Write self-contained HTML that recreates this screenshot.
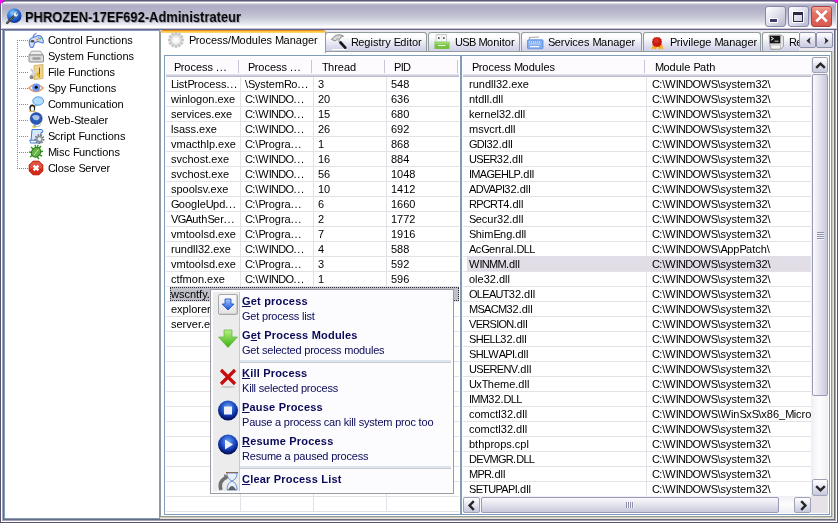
<!DOCTYPE html><html><head><meta charset="utf-8"><style>
html,body{margin:0;padding:0;}
body{width:838px;height:523px;overflow:hidden;background:#ff00ff;position:relative;font-family:"Liberation Sans",sans-serif;}
#win{position:absolute;left:0;top:0;width:838px;height:523px;overflow:hidden;border-radius:7px 7px 0 0;background:#5a5c76;}
svg{position:absolute;overflow:visible}
div{will-change:transform}
</style></head><body><div id="win">
<div style="position:absolute;left:0px;top:0px;width:838px;height:30px;background:#5a5c76;border-radius:7px 7px 0 0;"></div>
<div style="position:absolute;left:1px;top:1px;width:836px;height:29px;background:linear-gradient(to bottom,#aaa2ba 0px,#aaa2ba 1px,#ffffff 1px,#ffffff 2px,#d4d6e2 2px,#d4d6e2 3px,#bebcce 3px,#bebcce 4px,#b0aec6 4px,#b2b0c8 8px,#bcbece 13px,#d0d2de 19px,#e8e8f0 23px,#f8f8fc 25px,#ffffff 25px,#ffffff 27px,#c4c4d4 27px,#c4c4d4 28px,#66668a 28px,#66668a 29px);border-radius:6px 6px 0 0;"></div>
<div style="position:absolute;left:1px;top:3px;width:1px;height:26px;background:linear-gradient(#ffffff,#eeeef6);"></div>
<div style="position:absolute;left:836px;top:3px;width:1px;height:26px;background:linear-gradient(#ffffff,#e4e4ee);"></div>
<svg style="left:6px;top:8px" width="17" height="17" viewBox="0 0 17 17">
<defs><radialGradient id="gs" cx="0.38" cy="0.3" r="0.75"><stop offset="0" stop-color="#8ad0ff"/><stop offset="0.45" stop-color="#2a78e0"/><stop offset="1" stop-color="#0c2a90"/></radialGradient></defs>
<circle cx="8.3" cy="7.8" r="7.2" fill="url(#gs)"/>
<path d="M1.2 15 L9 7" stroke="#3a3a3a" stroke-width="2.4" stroke-linecap="round"/>
<path d="M1.2 15 L9 7" stroke="#a0a0a0" stroke-width="0.9" stroke-dasharray="1 1"/>
<path d="M8.2 8.3 L7.4 6.2 Q8 3.6 10.6 3.6 L11.2 3.8 L9.8 5.6 L10.6 6.6 L12.2 5.2 Q12.6 7.6 10.4 8.8 Z" fill="#f4f4f4" stroke="#888" stroke-width="0.5"/>
</svg>
<div style="position:absolute;left:25px;top:10px;font-size:14px;line-height:15px;font-weight:bold;color:#000;letter-spacing:0px;white-space:nowrap;text-shadow:1px 1px 0 #a8a8bc;transform:scaleX(0.922);transform-origin:0 0;">PHROZEN-17EF692-Administrateur</div>
<div style="position:absolute;left:765px;top:6px;width:21px;height:21px;box-sizing:border-box;border:1px solid #8888a8;border-radius:3px;background:linear-gradient(135deg,#ffffff 0%,#e6e6f0 40%,#b8b8d0 100%);"></div>
<div style="position:absolute;left:788px;top:6px;width:21px;height:21px;box-sizing:border-box;border:1px solid #8888a8;border-radius:3px;background:linear-gradient(135deg,#ffffff 0%,#e6e6f0 40%,#b8b8d0 100%);"></div>
<div style="position:absolute;left:811px;top:6px;width:21px;height:21px;box-sizing:border-box;border:1px solid #b04040;border-radius:3px;background:linear-gradient(to bottom,#f2a898 0%,#e47468 30%,#de6258 70%,#d45a50 100%);"></div>
<div style="position:absolute;left:769px;top:18px;width:9px;height:5px;box-sizing:border-box;border:1px solid #fff;background:#3c3c6a;"></div>
<div style="position:absolute;left:792px;top:11px;width:12px;height:12px;box-sizing:border-box;border:1px solid #fff;"></div>
<div style="position:absolute;left:793px;top:12px;width:10px;height:10px;box-sizing:border-box;border:1px solid #2a2a48;border-top-width:3px;"></div>
<svg style="left:811px;top:6px" width="21" height="21" viewBox="0 0 21 21"><path d="M5.2 4.8 L15.8 15.6 M15.8 4.8 L5.2 15.6" stroke="#902828" stroke-width="3.6" stroke-opacity="0.35"/><path d="M5.2 4.8 L15.8 15.6 M15.8 4.8 L5.2 15.6" stroke="#fff" stroke-width="2.8"/></svg>
<div style="position:absolute;left:0px;top:30px;width:1px;height:493px;background:#545670;"></div>
<div style="position:absolute;left:1px;top:30px;width:1px;height:492px;background:#ffffff;"></div>
<div style="position:absolute;left:2px;top:30px;width:1px;height:490px;background:#a8a4b8;"></div>
<div style="position:absolute;left:3px;top:30px;width:1px;height:489px;background:#6a6a80;"></div>
<div style="position:absolute;left:837px;top:30px;width:1px;height:493px;background:#545670;"></div>
<div style="position:absolute;left:836px;top:30px;width:1px;height:492px;background:#ffffff;"></div>
<div style="position:absolute;left:835px;top:30px;width:1px;height:490px;background:#a8a4b8;"></div>
<div style="position:absolute;left:834px;top:30px;width:1px;height:489px;background:#6a6a80;"></div>
<div style="position:absolute;left:0px;top:522px;width:838px;height:1px;background:#545670;"></div>
<div style="position:absolute;left:1px;top:521px;width:836px;height:1px;background:#ffffff;"></div>
<div style="position:absolute;left:2px;top:520px;width:834px;height:1px;background:#a8a4b8;"></div>
<div style="position:absolute;left:3px;top:519px;width:832px;height:1px;background:#6a6a80;"></div>
<div style="position:absolute;left:4px;top:30px;width:156px;height:489px;box-sizing:border-box;border:1px solid #7f9db9;background:#fff;"></div>
<svg style="left:0;top:0" width="160" height="200">
<rect x="17" y="40" width="1" height="1" fill="#8e8a80"/>
<rect x="17" y="42" width="1" height="1" fill="#8e8a80"/>
<rect x="17" y="44" width="1" height="1" fill="#8e8a80"/>
<rect x="17" y="46" width="1" height="1" fill="#8e8a80"/>
<rect x="17" y="48" width="1" height="1" fill="#8e8a80"/>
<rect x="17" y="50" width="1" height="1" fill="#8e8a80"/>
<rect x="17" y="52" width="1" height="1" fill="#8e8a80"/>
<rect x="17" y="54" width="1" height="1" fill="#8e8a80"/>
<rect x="17" y="56" width="1" height="1" fill="#8e8a80"/>
<rect x="17" y="58" width="1" height="1" fill="#8e8a80"/>
<rect x="17" y="60" width="1" height="1" fill="#8e8a80"/>
<rect x="17" y="62" width="1" height="1" fill="#8e8a80"/>
<rect x="17" y="64" width="1" height="1" fill="#8e8a80"/>
<rect x="17" y="66" width="1" height="1" fill="#8e8a80"/>
<rect x="17" y="68" width="1" height="1" fill="#8e8a80"/>
<rect x="17" y="70" width="1" height="1" fill="#8e8a80"/>
<rect x="17" y="72" width="1" height="1" fill="#8e8a80"/>
<rect x="17" y="74" width="1" height="1" fill="#8e8a80"/>
<rect x="17" y="76" width="1" height="1" fill="#8e8a80"/>
<rect x="17" y="78" width="1" height="1" fill="#8e8a80"/>
<rect x="17" y="80" width="1" height="1" fill="#8e8a80"/>
<rect x="17" y="82" width="1" height="1" fill="#8e8a80"/>
<rect x="17" y="84" width="1" height="1" fill="#8e8a80"/>
<rect x="17" y="86" width="1" height="1" fill="#8e8a80"/>
<rect x="17" y="88" width="1" height="1" fill="#8e8a80"/>
<rect x="17" y="90" width="1" height="1" fill="#8e8a80"/>
<rect x="17" y="92" width="1" height="1" fill="#8e8a80"/>
<rect x="17" y="94" width="1" height="1" fill="#8e8a80"/>
<rect x="17" y="96" width="1" height="1" fill="#8e8a80"/>
<rect x="17" y="98" width="1" height="1" fill="#8e8a80"/>
<rect x="17" y="100" width="1" height="1" fill="#8e8a80"/>
<rect x="17" y="102" width="1" height="1" fill="#8e8a80"/>
<rect x="17" y="104" width="1" height="1" fill="#8e8a80"/>
<rect x="17" y="106" width="1" height="1" fill="#8e8a80"/>
<rect x="17" y="108" width="1" height="1" fill="#8e8a80"/>
<rect x="17" y="110" width="1" height="1" fill="#8e8a80"/>
<rect x="17" y="112" width="1" height="1" fill="#8e8a80"/>
<rect x="17" y="114" width="1" height="1" fill="#8e8a80"/>
<rect x="17" y="116" width="1" height="1" fill="#8e8a80"/>
<rect x="17" y="118" width="1" height="1" fill="#8e8a80"/>
<rect x="17" y="120" width="1" height="1" fill="#8e8a80"/>
<rect x="17" y="122" width="1" height="1" fill="#8e8a80"/>
<rect x="17" y="124" width="1" height="1" fill="#8e8a80"/>
<rect x="17" y="126" width="1" height="1" fill="#8e8a80"/>
<rect x="17" y="128" width="1" height="1" fill="#8e8a80"/>
<rect x="17" y="130" width="1" height="1" fill="#8e8a80"/>
<rect x="17" y="132" width="1" height="1" fill="#8e8a80"/>
<rect x="17" y="134" width="1" height="1" fill="#8e8a80"/>
<rect x="17" y="136" width="1" height="1" fill="#8e8a80"/>
<rect x="17" y="138" width="1" height="1" fill="#8e8a80"/>
<rect x="17" y="140" width="1" height="1" fill="#8e8a80"/>
<rect x="17" y="142" width="1" height="1" fill="#8e8a80"/>
<rect x="17" y="144" width="1" height="1" fill="#8e8a80"/>
<rect x="17" y="146" width="1" height="1" fill="#8e8a80"/>
<rect x="17" y="148" width="1" height="1" fill="#8e8a80"/>
<rect x="17" y="150" width="1" height="1" fill="#8e8a80"/>
<rect x="17" y="152" width="1" height="1" fill="#8e8a80"/>
<rect x="17" y="154" width="1" height="1" fill="#8e8a80"/>
<rect x="17" y="156" width="1" height="1" fill="#8e8a80"/>
<rect x="17" y="158" width="1" height="1" fill="#8e8a80"/>
<rect x="17" y="160" width="1" height="1" fill="#8e8a80"/>
<rect x="17" y="162" width="1" height="1" fill="#8e8a80"/>
<rect x="17" y="164" width="1" height="1" fill="#8e8a80"/>
<rect x="17" y="166" width="1" height="1" fill="#8e8a80"/>
<rect x="17" y="168" width="1" height="1" fill="#8e8a80"/>
<rect x="19" y="40" width="1" height="1" fill="#8e8a80"/>
<rect x="21" y="40" width="1" height="1" fill="#8e8a80"/>
<rect x="23" y="40" width="1" height="1" fill="#8e8a80"/>
<rect x="25" y="40" width="1" height="1" fill="#8e8a80"/>
<rect x="27" y="40" width="1" height="1" fill="#8e8a80"/>
<rect x="19" y="56" width="1" height="1" fill="#8e8a80"/>
<rect x="21" y="56" width="1" height="1" fill="#8e8a80"/>
<rect x="23" y="56" width="1" height="1" fill="#8e8a80"/>
<rect x="25" y="56" width="1" height="1" fill="#8e8a80"/>
<rect x="27" y="56" width="1" height="1" fill="#8e8a80"/>
<rect x="19" y="72" width="1" height="1" fill="#8e8a80"/>
<rect x="21" y="72" width="1" height="1" fill="#8e8a80"/>
<rect x="23" y="72" width="1" height="1" fill="#8e8a80"/>
<rect x="25" y="72" width="1" height="1" fill="#8e8a80"/>
<rect x="27" y="72" width="1" height="1" fill="#8e8a80"/>
<rect x="19" y="88" width="1" height="1" fill="#8e8a80"/>
<rect x="21" y="88" width="1" height="1" fill="#8e8a80"/>
<rect x="23" y="88" width="1" height="1" fill="#8e8a80"/>
<rect x="25" y="88" width="1" height="1" fill="#8e8a80"/>
<rect x="27" y="88" width="1" height="1" fill="#8e8a80"/>
<rect x="19" y="104" width="1" height="1" fill="#8e8a80"/>
<rect x="21" y="104" width="1" height="1" fill="#8e8a80"/>
<rect x="23" y="104" width="1" height="1" fill="#8e8a80"/>
<rect x="25" y="104" width="1" height="1" fill="#8e8a80"/>
<rect x="27" y="104" width="1" height="1" fill="#8e8a80"/>
<rect x="19" y="120" width="1" height="1" fill="#8e8a80"/>
<rect x="21" y="120" width="1" height="1" fill="#8e8a80"/>
<rect x="23" y="120" width="1" height="1" fill="#8e8a80"/>
<rect x="25" y="120" width="1" height="1" fill="#8e8a80"/>
<rect x="27" y="120" width="1" height="1" fill="#8e8a80"/>
<rect x="19" y="136" width="1" height="1" fill="#8e8a80"/>
<rect x="21" y="136" width="1" height="1" fill="#8e8a80"/>
<rect x="23" y="136" width="1" height="1" fill="#8e8a80"/>
<rect x="25" y="136" width="1" height="1" fill="#8e8a80"/>
<rect x="27" y="136" width="1" height="1" fill="#8e8a80"/>
<rect x="19" y="152" width="1" height="1" fill="#8e8a80"/>
<rect x="21" y="152" width="1" height="1" fill="#8e8a80"/>
<rect x="23" y="152" width="1" height="1" fill="#8e8a80"/>
<rect x="25" y="152" width="1" height="1" fill="#8e8a80"/>
<rect x="27" y="152" width="1" height="1" fill="#8e8a80"/>
<rect x="19" y="168" width="1" height="1" fill="#8e8a80"/>
<rect x="21" y="168" width="1" height="1" fill="#8e8a80"/>
<rect x="23" y="168" width="1" height="1" fill="#8e8a80"/>
<rect x="25" y="168" width="1" height="1" fill="#8e8a80"/>
<rect x="27" y="168" width="1" height="1" fill="#8e8a80"/>
</svg>
<div style="position:absolute;left:48px;top:35px;font-size:11px;line-height:11px;height:11px;white-space:nowrap;color:#000;font-weight:normal;letter-spacing:0px;"><span style="letter-spacing:-0.7px">C</span>ontrol <span style="letter-spacing:-0.7px">F</span>unctions</div>
<div style="position:absolute;left:48px;top:51px;font-size:11px;line-height:11px;height:11px;white-space:nowrap;color:#000;font-weight:normal;letter-spacing:0px;"><span style="letter-spacing:-0.7px">S</span>ystem <span style="letter-spacing:-0.7px">F</span>unctions</div>
<div style="position:absolute;left:48px;top:67px;font-size:11px;line-height:11px;height:11px;white-space:nowrap;color:#000;font-weight:normal;letter-spacing:0px;"><span style="letter-spacing:-0.7px">F</span>ile <span style="letter-spacing:-0.7px">F</span>unctions</div>
<div style="position:absolute;left:48px;top:83px;font-size:11px;line-height:11px;height:11px;white-space:nowrap;color:#000;font-weight:normal;letter-spacing:0px;"><span style="letter-spacing:-0.7px">S</span>py <span style="letter-spacing:-0.7px">F</span>unctions</div>
<div style="position:absolute;left:48px;top:99px;font-size:11px;line-height:11px;height:11px;white-space:nowrap;color:#000;font-weight:normal;letter-spacing:0px;"><span style="letter-spacing:-0.7px">C</span>ommunication</div>
<div style="position:absolute;left:48px;top:115px;font-size:11px;line-height:11px;height:11px;white-space:nowrap;color:#000;font-weight:normal;letter-spacing:0px;">Web-<span style="letter-spacing:-0.7px">S</span>tealer</div>
<div style="position:absolute;left:48px;top:131px;font-size:11px;line-height:11px;height:11px;white-space:nowrap;color:#000;font-weight:normal;letter-spacing:0px;"><span style="letter-spacing:-0.7px">S</span>cript <span style="letter-spacing:-0.7px">F</span>unctions</div>
<div style="position:absolute;left:48px;top:147px;font-size:11px;line-height:11px;height:11px;white-space:nowrap;color:#000;font-weight:normal;letter-spacing:0px;"><span style="letter-spacing:-0.7px">M</span>isc <span style="letter-spacing:-0.7px">F</span>unctions</div>
<div style="position:absolute;left:48px;top:163px;font-size:11px;line-height:11px;height:11px;white-space:nowrap;color:#000;font-weight:normal;letter-spacing:0px;"><span style="letter-spacing:-0.7px">C</span>lose <span style="letter-spacing:-0.7px">S</span>erver</div>
<svg style="left:28px;top:32px" width="16" height="16" viewBox="0 0 16 16"><path d="M5 5.5 Q5.5 2.5 8.5 1" stroke="#6a8ae0" stroke-width="1.3" fill="none"/><path d="M1.5 8 Q3 5.5 6 5.2 L10 3.6 Q13 3.2 14.5 6.5 Q16 9.5 15.2 10.8 Q14 11.5 12.5 10.2 L9.5 9.6 L6.5 11 Q6 14 4.8 15.4 Q3 16 2 14.2 Q0.6 11.5 1.5 8 Z" fill="#cfe0fa" stroke="#5878d8" stroke-width="1.1"/><ellipse cx="4.5" cy="9.3" rx="1.9" ry="1.3" fill="#505050"/><circle cx="9.2" cy="7.6" r="0.9" fill="#f07040"/><circle cx="10.9" cy="8.1" r="0.8" fill="#f0c020"/><circle cx="12.2" cy="6.6" r="0.9" fill="#40b040"/><circle cx="10.6" cy="6" r="0.7" fill="#6080f0"/></svg>
<svg style="left:28px;top:48px" width="16" height="16" viewBox="0 0 16 16"><path d="M3.5 3.2 L12.5 3.2 L15 7 L1 7 Z" fill="#f0f0f0" stroke="#9a9a9a" stroke-width="0.9"/><rect x="1" y="7" width="14.5" height="7" rx="0.8" fill="#dcdcdc" stroke="#808080" stroke-width="0.9"/><rect x="4.5" y="9.3" width="8" height="2.4" fill="#9a9a9a"/></svg>
<svg style="left:28px;top:64px" width="16" height="16" viewBox="0 0 16 16"><path d="M6 1.5 L15 0.5 L15 14.5 L6 15.5 Z" fill="#f0d490" stroke="#c8a050" stroke-width="0.7"/><path d="M11 3.5 L12 3.5 L12 13 L11 13.5 Z" fill="#7a6030"/><path d="M9 9 L11.5 12.5" stroke="#e8b800" stroke-width="2.4"/><path d="M3 5 L8 12" stroke="#c8c8c8" stroke-width="1.8"/><path d="M2 13 L7 7" stroke="#d8d8d8" stroke-width="2"/><circle cx="3.6" cy="13.2" r="2" fill="#8e8a80"/></svg>
<svg style="left:28px;top:80px" width="16" height="16" viewBox="0 0 16 16"><path d="M0.8 8 Q8 0.5 15.2 8 Q8 15.5 0.8 8 Z" fill="#fafafa" stroke="#e89868" stroke-width="1.2"/><circle cx="8.2" cy="7.6" r="4" fill="#6898f0"/><circle cx="8.2" cy="7.2" r="1.5" fill="#000"/></svg>
<svg style="left:28px;top:96px" width="16" height="16" viewBox="0 0 16 16"><ellipse cx="10.2" cy="5" rx="5.4" ry="4.2" fill="#b0dcff" stroke="#4a90e0" stroke-width="0.9"/><path d="M7.6 8.4 L6.4 10.6 L9.6 9" fill="#b0dcff" stroke="#4a90e0" stroke-width="0.6"/><ellipse cx="4.3" cy="12" rx="2.9" ry="3.6" fill="#1a1a1a"/><ellipse cx="4.4" cy="12.8" rx="1.8" ry="2.5" fill="#f4f4f4"/><rect x="3.6" y="10" width="1.6" height="0.9" fill="#e8c020"/><rect x="1.2" y="14.8" width="2.4" height="1.2" fill="#e8b820"/><rect x="5" y="14.8" width="2.4" height="1.2" fill="#e8b820"/></svg>
<svg style="left:28px;top:112px" width="16" height="16" viewBox="0 0 16 16"><circle cx="8.2" cy="6.6" r="6" fill="#2858b8" stroke="#183888" stroke-width="0.6"/><path d="M4 4.5 Q7 2 11 4 Q12.5 6 10 8 Q7 9 5.5 7 Z" fill="#d8e4f8" opacity="0.75"/><path d="M12.5 10 Q14 13 10 14.5 L7 15" stroke="#8a8a8a" stroke-width="1" fill="none" stroke-dasharray="1 0.6"/><circle cx="5.8" cy="14.6" r="1.5" fill="#f0d020"/><circle cx="7" cy="13.8" r="1" fill="#60b0ff"/></svg>
<svg style="left:28px;top:128px" width="16" height="16" viewBox="0 0 16 16"><path d="M4 1.5 L14 1.5 Q15.5 2.5 14.5 4.5 L13 4.5 L12.5 13 L3 13 Z" fill="#d8e8fc" stroke="#3a78d8" stroke-width="1"/><path d="M1.8 12.2 L12 12.2 L12.5 15 L2.5 15 Z" fill="#f4f8ff" stroke="#3a70c8" stroke-width="0.9"/><circle cx="11.5" cy="11" r="3.8" fill="none" stroke="#7a7a7a" stroke-width="2.4" stroke-dasharray="1.5 1.1"/><circle cx="11.5" cy="11" r="2.5" fill="#e0f0ff" stroke="#909090" stroke-width="1.3"/></svg>
<svg style="left:28px;top:144px" width="16" height="16" viewBox="0 0 16 16"><path d="M3 3 L5.5 5.5 M1 8 L4 8.5 M2 13 L4.5 11 M13 2 L11 4.5 M15 7 L12.5 8 M14 12 L11.5 11 M7 0.8 L7.6 3.2 M10 0.8 L9.5 3 M11 15 L9 12.5" stroke="#2a9a18" stroke-width="1.4"/><ellipse cx="8" cy="8.2" rx="4.4" ry="5.2" transform="rotate(35 8 8.2)" fill="#68b048" stroke="#2a7a18" stroke-width="1"/><path d="M6 11 L10.5 5.5" stroke="#c8f0a8" stroke-width="1"/></svg>
<svg style="left:28px;top:160px" width="16" height="16" viewBox="0 0 16 16"><path d="M5 1 L11 1 L15 5 L15 11 L11 15 L5 15 L1 11 L1 5 Z" fill="#d42a18" stroke="#c02010" stroke-width="0.6"/><path d="M5 1.8 L11 1.8 L14.2 5 L14.2 8.5 L1.8 8.5 L1.8 5 Z" fill="#f08878" opacity="0.45"/><path d="M5.6 5.6 L10.4 10.4 M10.4 5.6 L5.6 10.4" stroke="#fff" stroke-width="2.3"/></svg>
<div style="position:absolute;left:160px;top:30px;width:674px;height:21px;background:#ece6ee;"></div>
<div style="position:absolute;left:160px;top:51px;width:674px;height:468px;box-sizing:border-box;background:#fff;border-left:1px solid #919b9c;border-top:1px solid #919b9c;"></div>
<div style="position:absolute;left:831px;top:51px;width:1px;height:466px;background:#919b9c;"></div>
<div style="position:absolute;left:832px;top:51px;width:1px;height:467px;background:#d0ccba;"></div>
<div style="position:absolute;left:833px;top:51px;width:1px;height:468px;background:#e6e2d6;"></div>
<div style="position:absolute;left:160px;top:516px;width:672px;height:1px;background:#919b9c;"></div>
<div style="position:absolute;left:160px;top:517px;width:673px;height:1px;background:#d0ccba;"></div>
<div style="position:absolute;left:160px;top:518px;width:674px;height:1px;background:#e6e2d6;"></div>
<div style="position:absolute;left:325px;top:32px;width:102px;height:19px;overflow:hidden;"><div style="position:absolute;left:0;top:0;width:102px;height:19px;box-sizing:border-box;border:1px solid #919b9c;border-bottom:none;border-radius:3px 3px 0 0;background:linear-gradient(to bottom,#ffffff 0%,#ffffff 22%,#ececf6 50%,#dadaee 78%,#d2d2e8 100%);overflow:hidden;"></div></div>
<svg style="left:331px;top:34px" width="16" height="16" viewBox="0 0 16 16"><path d="M0.5 5.5 L3 2.5 Q6 0 10.5 1 L12.5 2.2 L10 3 L8.5 5.5 L6.5 5 L4.5 6.8 Z" fill="#d8d8d8" stroke="#707070" stroke-width="0.8"/><path d="M6.5 5.2 L9.5 8.5" stroke="#c0c0c0" stroke-width="2"/><path d="M9.5 8.5 L14.2 13.6" stroke="#181818" stroke-width="2.8" stroke-linecap="round"/><rect x="1" y="15" width="14" height="1" fill="#ffffff"/></svg>
<div style="position:absolute;left:351px;top:37px;font-size:11px;line-height:11px;height:11px;white-space:nowrap;color:#000;font-weight:normal;letter-spacing:0px;"><span style="letter-spacing:-0.7px">R</span>egistry <span style="letter-spacing:-0.7px">E</span>ditor</div>
<div style="position:absolute;left:428px;top:32px;width:92px;height:19px;overflow:hidden;"><div style="position:absolute;left:0;top:0;width:92px;height:19px;box-sizing:border-box;border:1px solid #919b9c;border-bottom:none;border-radius:3px 3px 0 0;background:linear-gradient(to bottom,#ffffff 0%,#ffffff 22%,#ececf6 50%,#dadaee 78%,#d2d2e8 100%);overflow:hidden;"></div></div>
<svg style="left:434px;top:34px" width="16" height="16" viewBox="0 0 16 16"><rect x="2" y="0.6" width="10.5" height="7.4" fill="#f8f8f8" stroke="#c0c0c0" stroke-width="0.8"/><rect x="4" y="3.2" width="1.6" height="1.8" fill="#555"/><rect x="9" y="3.2" width="1.6" height="1.8" fill="#555"/><rect x="7.1" y="1" width="0.5" height="7" fill="#d8d8d8"/><rect x="0.5" y="7.8" width="15" height="7.2" fill="#78c040"/><rect x="0.5" y="7.8" width="15" height="2.5" fill="#98d868"/><path d="M4 11.5 L11.5 11.5" stroke="#e8f8e0" stroke-width="1"/></svg>
<div style="position:absolute;left:455px;top:37px;font-size:11px;line-height:11px;height:11px;white-space:nowrap;color:#000;font-weight:normal;letter-spacing:0px;"><span style="letter-spacing:-0.7px">USB</span> <span style="letter-spacing:-0.7px">M</span>onitor</div>
<div style="position:absolute;left:521px;top:32px;width:121px;height:19px;overflow:hidden;"><div style="position:absolute;left:0;top:0;width:121px;height:19px;box-sizing:border-box;border:1px solid #919b9c;border-bottom:none;border-radius:3px 3px 0 0;background:linear-gradient(to bottom,#ffffff 0%,#ffffff 22%,#ececf6 50%,#dadaee 78%,#d2d2e8 100%);overflow:hidden;"></div></div>
<svg style="left:527px;top:34px" width="16" height="16" viewBox="0 0 16 16"><path d="M2.5 5.5 L2.5 3.5 L12 3" stroke="#a8a8a8" stroke-width="1.2" fill="none"/><rect x="0.5" y="5.8" width="15.5" height="9" rx="0.8" fill="#80aef0" stroke="#5a88d8" stroke-width="0.8"/><path d="M2 8 H13.5 M2.5 10 H13.5 M3 12.6 H13" stroke="#ffffff" stroke-width="1.2" stroke-dasharray="1 1"/><path d="M4 12.6 H12" stroke="#ffffff" stroke-width="1"/></svg>
<div style="position:absolute;left:548px;top:37px;font-size:11px;line-height:11px;height:11px;white-space:nowrap;color:#000;font-weight:normal;letter-spacing:0px;"><span style="letter-spacing:-0.7px">S</span>ervices <span style="letter-spacing:-0.7px">M</span>anager</div>
<div style="position:absolute;left:643px;top:32px;width:118px;height:19px;overflow:hidden;"><div style="position:absolute;left:0;top:0;width:118px;height:19px;box-sizing:border-box;border:1px solid #919b9c;border-bottom:none;border-radius:3px 3px 0 0;background:linear-gradient(to bottom,#ffffff 0%,#ffffff 22%,#ececf6 50%,#dadaee 78%,#d2d2e8 100%);overflow:hidden;"></div></div>
<svg style="left:649px;top:34px" width="16" height="16" viewBox="0 0 16 16"><path d="M4 10 L2.5 15.5 L5 14.5 L7 16 L8.5 11 L10 16 L12 14.5 L14.5 15.5 L13 10 Z" fill="#f8b020"/><path d="M8 3 L9.2 3.5 L10.6 3.3 L11.3 4.5 L12.5 5.2 L12.4 6.6 L13 8 L12.4 9.4 L12.5 10.8 L11.3 11.5 L10.6 12.7 L9.2 12.5 L8 13 L6.8 12.5 L5.4 12.7 L4.7 11.5 L3.5 10.8 L3.6 9.4 L3 8 L3.6 6.6 L3.5 5.2 L4.7 4.5 L5.4 3.3 L6.8 3.5 Z" fill="#c81810"/><circle cx="7.5" cy="6.8" r="2.5" fill="#e04030" opacity="0.6"/></svg>
<div style="position:absolute;left:670px;top:37px;font-size:11px;line-height:11px;height:11px;white-space:nowrap;color:#000;font-weight:normal;letter-spacing:0px;"><span style="letter-spacing:-0.7px">P</span>rivilege <span style="letter-spacing:-0.7px">M</span>anager</div>
<div style="position:absolute;left:762px;top:32px;width:37px;height:19px;overflow:hidden;"><div style="position:absolute;left:0;top:0;width:99px;height:19px;box-sizing:border-box;border:1px solid #919b9c;border-bottom:none;border-radius:3px 3px 0 0;background:linear-gradient(to bottom,#ffffff 0%,#ffffff 22%,#ececf6 50%,#dadaee 78%,#d2d2e8 100%);overflow:hidden;"></div></div>
<svg style="left:768px;top:34px" width="16" height="16" viewBox="0 0 16 16"><path d="M1 1 L13 1 L15.5 2.5 L15.5 12 L13 15 L3 15.5 L2 12 Z" fill="#e8e8e8" stroke="#909090" stroke-width="0.8"/><rect x="1.5" y="1.5" width="11" height="8" fill="#151515" stroke="#b0b0b0" stroke-width="0.6"/><path d="M3 3 L5.5 4.6 L3 6.2" stroke="#fff" stroke-width="1" fill="none"/><path d="M6.5 7.2 H10.5" stroke="#d0d0d0" stroke-width="1"/><path d="M2.5 11 L12.5 11 L12.5 15 L3 15 Z" fill="#f4f4f4" stroke="#a0a0a0" stroke-width="0.6"/></svg>
<div style="position:absolute;left:762px;top:32px;width:37px;height:19px;overflow:hidden;"><div style="position:absolute;left:27px;top:5px;font-size:11px;line-height:11px;letter-spacing:0px;white-space:nowrap"><span style="letter-spacing:-0.7px">R</span>emote <span style="letter-spacing:-0.7px">S</span>hell</div></div>
<div style="position:absolute;left:160px;top:30px;width:166px;height:23px;box-sizing:border-box;border-left:1px solid #919b9c;border-right:1px solid #919b9c;background:#fff;border-radius:3px 3px 0 0;overflow:hidden;"><div style="position:absolute;left:0;top:0;width:164px;height:1px;background:#e68b2c"></div><div style="position:absolute;left:0;top:1px;width:164px;height:1px;background:#ffc73c"></div><div style="position:absolute;left:0;top:2px;width:164px;height:1px;background:#fdd46a"></div></div>
<svg style="left:168px;top:32px" width="16" height="16" viewBox="0 0 16 16"><rect x="6.7" y="0" width="2.6" height="3.4" fill="#c6c6c6" transform="rotate(0 8 8)"/><rect x="6.7" y="0" width="2.6" height="3.4" fill="#c6c6c6" transform="rotate(30 8 8)"/><rect x="6.7" y="0" width="2.6" height="3.4" fill="#c6c6c6" transform="rotate(60 8 8)"/><rect x="6.7" y="0" width="2.6" height="3.4" fill="#c6c6c6" transform="rotate(90 8 8)"/><rect x="6.7" y="0" width="2.6" height="3.4" fill="#c6c6c6" transform="rotate(120 8 8)"/><rect x="6.7" y="0" width="2.6" height="3.4" fill="#c6c6c6" transform="rotate(150 8 8)"/><rect x="6.7" y="0" width="2.6" height="3.4" fill="#c6c6c6" transform="rotate(180 8 8)"/><rect x="6.7" y="0" width="2.6" height="3.4" fill="#c6c6c6" transform="rotate(210 8 8)"/><rect x="6.7" y="0" width="2.6" height="3.4" fill="#c6c6c6" transform="rotate(240 8 8)"/><rect x="6.7" y="0" width="2.6" height="3.4" fill="#c6c6c6" transform="rotate(270 8 8)"/><rect x="6.7" y="0" width="2.6" height="3.4" fill="#c6c6c6" transform="rotate(300 8 8)"/><rect x="6.7" y="0" width="2.6" height="3.4" fill="#c6c6c6" transform="rotate(330 8 8)"/><circle cx="8" cy="8" r="5.5" fill="#e4e4e4" stroke="#c8c8c8" stroke-width="0.8"/><circle cx="8" cy="8" r="3.6" fill="#f4f4f4"/><circle cx="8" cy="8" r="2.2" fill="#ffffff"/></svg>
<div style="position:absolute;left:189px;top:35px;font-size:11px;line-height:11px;height:11px;white-space:nowrap;color:#000;font-weight:normal;letter-spacing:0px;"><span style="letter-spacing:-0.7px">P</span>rocess/<span style="letter-spacing:-0.7px">M</span>odules <span style="letter-spacing:-0.7px">M</span>anager</div>
<div style="position:absolute;left:799px;top:32px;width:17px;height:16px;box-sizing:border-box;border:1px solid #a4a8bc;border-radius:2px;background:linear-gradient(to bottom,#ffffff 0%,#f2f2f8 25%,#dcdcec 60%,#cccce2 100%);border-color:#8c90a8;"><svg style="left:6px;top:4px" width="6" height="8"><path d="M4.6 0.3 L0.4 3.8 L4.6 7.3 L3.6 3.8 Z" fill="#282828"/></svg></div>
<div style="position:absolute;left:816px;top:32px;width:17px;height:16px;box-sizing:border-box;border:1px solid #a4a8bc;border-radius:2px;background:linear-gradient(to bottom,#ffffff 0%,#f2f2f8 25%,#dcdcec 60%,#cccce2 100%);border-color:#8c90a8;"><svg style="left:7px;top:4px" width="6" height="8"><path d="M0.4 0.3 L4.6 3.8 L0.4 7.3 L1.4 3.8 Z" fill="#282828"/></svg></div>
<div style="position:absolute;left:164px;top:55px;width:297px;height:460px;box-sizing:border-box;border:1px solid #7f9db9;background:#fff;"></div>
<div style="position:absolute;left:166px;top:57px;width:293px;height:20px;background:linear-gradient(to bottom,#fdfbfd 0px,#fdfbfd 17px,#e2e2ec 17px,#e2e2ec 18px,#d0d0de 18px,#d0d0de 19px,#bcbccc 19px,#bcbccc 20px);"></div>
<div style="position:absolute;left:238px;top:60px;width:1px;height:13px;background:#c6c6da;"></div>
<div style="position:absolute;left:311px;top:60px;width:1px;height:13px;background:#c6c6da;"></div>
<div style="position:absolute;left:384px;top:60px;width:1px;height:13px;background:#c6c6da;"></div>
<div style="position:absolute;left:457px;top:60px;width:1px;height:13px;background:#c6c6da;"></div>
<div style="position:absolute;left:174px;top:62px;font-size:11px;line-height:11px;height:11px;white-space:nowrap;color:#000;font-weight:normal;letter-spacing:0px;"><span style="letter-spacing:-0.7px">P</span>rocess <span style="letter-spacing:0.7px">...</span></div>
<div style="position:absolute;left:248px;top:62px;font-size:11px;line-height:11px;height:11px;white-space:nowrap;color:#000;font-weight:normal;letter-spacing:0px;"><span style="letter-spacing:-0.7px">P</span>rocess <span style="letter-spacing:0.7px">...</span></div>
<div style="position:absolute;left:322px;top:62px;font-size:11px;line-height:11px;height:11px;white-space:nowrap;color:#000;font-weight:normal;letter-spacing:0px;"><span style="letter-spacing:-0.7px">T</span>hread</div>
<div style="position:absolute;left:394px;top:62px;font-size:11px;line-height:11px;height:11px;white-space:nowrap;color:#000;font-weight:normal;letter-spacing:0px;"><span style="letter-spacing:-0.7px">PID</span></div>
<div style="position:absolute;left:166px;top:91px;width:293px;height:1px;background:#e6e0e8;"></div>
<div style="position:absolute;left:166px;top:106px;width:293px;height:1px;background:#e6e0e8;"></div>
<div style="position:absolute;left:166px;top:121px;width:293px;height:1px;background:#e6e0e8;"></div>
<div style="position:absolute;left:166px;top:136px;width:293px;height:1px;background:#e6e0e8;"></div>
<div style="position:absolute;left:166px;top:151px;width:293px;height:1px;background:#e6e0e8;"></div>
<div style="position:absolute;left:166px;top:166px;width:293px;height:1px;background:#e6e0e8;"></div>
<div style="position:absolute;left:166px;top:181px;width:293px;height:1px;background:#e6e0e8;"></div>
<div style="position:absolute;left:166px;top:196px;width:293px;height:1px;background:#e6e0e8;"></div>
<div style="position:absolute;left:166px;top:211px;width:293px;height:1px;background:#e6e0e8;"></div>
<div style="position:absolute;left:166px;top:226px;width:293px;height:1px;background:#e6e0e8;"></div>
<div style="position:absolute;left:166px;top:241px;width:293px;height:1px;background:#e6e0e8;"></div>
<div style="position:absolute;left:166px;top:256px;width:293px;height:1px;background:#e6e0e8;"></div>
<div style="position:absolute;left:166px;top:271px;width:293px;height:1px;background:#e6e0e8;"></div>
<div style="position:absolute;left:166px;top:286px;width:293px;height:1px;background:#e6e0e8;"></div>
<div style="position:absolute;left:166px;top:301px;width:293px;height:1px;background:#e6e0e8;"></div>
<div style="position:absolute;left:166px;top:316px;width:293px;height:1px;background:#e6e0e8;"></div>
<div style="position:absolute;left:166px;top:331px;width:293px;height:1px;background:#e6e0e8;"></div>
<div style="position:absolute;left:166px;top:346px;width:293px;height:1px;background:#e6e0e8;"></div>
<div style="position:absolute;left:166px;top:361px;width:293px;height:1px;background:#e6e0e8;"></div>
<div style="position:absolute;left:166px;top:376px;width:293px;height:1px;background:#e6e0e8;"></div>
<div style="position:absolute;left:166px;top:391px;width:293px;height:1px;background:#e6e0e8;"></div>
<div style="position:absolute;left:166px;top:406px;width:293px;height:1px;background:#e6e0e8;"></div>
<div style="position:absolute;left:166px;top:421px;width:293px;height:1px;background:#e6e0e8;"></div>
<div style="position:absolute;left:166px;top:436px;width:293px;height:1px;background:#e6e0e8;"></div>
<div style="position:absolute;left:166px;top:451px;width:293px;height:1px;background:#e6e0e8;"></div>
<div style="position:absolute;left:166px;top:466px;width:293px;height:1px;background:#e6e0e8;"></div>
<div style="position:absolute;left:166px;top:481px;width:293px;height:1px;background:#e6e0e8;"></div>
<div style="position:absolute;left:166px;top:496px;width:293px;height:1px;background:#e6e0e8;"></div>
<div style="position:absolute;left:166px;top:511px;width:293px;height:1px;background:#e6e0e8;"></div>
<div style="position:absolute;left:240px;top:77px;width:1px;height:435px;background:#e6e0e8;"></div>
<div style="position:absolute;left:313px;top:77px;width:1px;height:435px;background:#e6e0e8;"></div>
<div style="position:absolute;left:386px;top:77px;width:1px;height:435px;background:#e6e0e8;"></div>
<div style="position:absolute;left:170px;top:287px;width:289px;height:14px;background:#c0c0c8;"></div>
<div style="position:absolute;left:170px;top:287px;width:289px;height:14px;box-sizing:border-box;border:1px dotted #303038;"></div>
<div style="position:absolute;left:171px;top:79px;font-size:11px;line-height:11px;height:11px;white-space:nowrap;color:#000;font-weight:normal;letter-spacing:0px;"><span style="letter-spacing:-0.7px">L</span>ist<span style="letter-spacing:-0.7px">P</span>rocess<span style="letter-spacing:0.7px">...</span></div>
<div style="position:absolute;left:245px;top:79px;font-size:11px;line-height:11px;height:11px;white-space:nowrap;color:#000;font-weight:normal;letter-spacing:0px;">\<span style="letter-spacing:-0.7px">S</span>ystem<span style="letter-spacing:-0.7px">R</span>o<span style="letter-spacing:0.7px">...</span></div>
<div style="position:absolute;left:318px;top:79px;font-size:11px;line-height:11px;height:11px;white-space:nowrap;color:#000;font-weight:normal;letter-spacing:0px;">3</div>
<div style="position:absolute;left:391px;top:79px;font-size:11px;line-height:11px;height:11px;white-space:nowrap;color:#000;font-weight:normal;letter-spacing:0px;">548</div>
<div style="position:absolute;left:171px;top:94px;font-size:11px;line-height:11px;height:11px;white-space:nowrap;color:#000;font-weight:normal;letter-spacing:0px;">winlogon.exe</div>
<div style="position:absolute;left:245px;top:94px;font-size:11px;line-height:11px;height:11px;white-space:nowrap;color:#000;font-weight:normal;letter-spacing:0px;"><span style="letter-spacing:-0.7px">C</span>:\W<span style="letter-spacing:-0.7px">INDO</span><span style="letter-spacing:0.7px">...</span></div>
<div style="position:absolute;left:318px;top:94px;font-size:11px;line-height:11px;height:11px;white-space:nowrap;color:#000;font-weight:normal;letter-spacing:0px;">20</div>
<div style="position:absolute;left:391px;top:94px;font-size:11px;line-height:11px;height:11px;white-space:nowrap;color:#000;font-weight:normal;letter-spacing:0px;">636</div>
<div style="position:absolute;left:171px;top:109px;font-size:11px;line-height:11px;height:11px;white-space:nowrap;color:#000;font-weight:normal;letter-spacing:0px;">services.exe</div>
<div style="position:absolute;left:245px;top:109px;font-size:11px;line-height:11px;height:11px;white-space:nowrap;color:#000;font-weight:normal;letter-spacing:0px;"><span style="letter-spacing:-0.7px">C</span>:\W<span style="letter-spacing:-0.7px">INDO</span><span style="letter-spacing:0.7px">...</span></div>
<div style="position:absolute;left:318px;top:109px;font-size:11px;line-height:11px;height:11px;white-space:nowrap;color:#000;font-weight:normal;letter-spacing:0px;">15</div>
<div style="position:absolute;left:391px;top:109px;font-size:11px;line-height:11px;height:11px;white-space:nowrap;color:#000;font-weight:normal;letter-spacing:0px;">680</div>
<div style="position:absolute;left:171px;top:124px;font-size:11px;line-height:11px;height:11px;white-space:nowrap;color:#000;font-weight:normal;letter-spacing:0px;">lsass.exe</div>
<div style="position:absolute;left:245px;top:124px;font-size:11px;line-height:11px;height:11px;white-space:nowrap;color:#000;font-weight:normal;letter-spacing:0px;"><span style="letter-spacing:-0.7px">C</span>:\W<span style="letter-spacing:-0.7px">INDO</span><span style="letter-spacing:0.7px">...</span></div>
<div style="position:absolute;left:318px;top:124px;font-size:11px;line-height:11px;height:11px;white-space:nowrap;color:#000;font-weight:normal;letter-spacing:0px;">26</div>
<div style="position:absolute;left:391px;top:124px;font-size:11px;line-height:11px;height:11px;white-space:nowrap;color:#000;font-weight:normal;letter-spacing:0px;">692</div>
<div style="position:absolute;left:171px;top:139px;font-size:11px;line-height:11px;height:11px;white-space:nowrap;color:#000;font-weight:normal;letter-spacing:0px;">vmacthlp.exe</div>
<div style="position:absolute;left:245px;top:139px;font-size:11px;line-height:11px;height:11px;white-space:nowrap;color:#000;font-weight:normal;letter-spacing:0px;"><span style="letter-spacing:-0.7px">C</span>:\<span style="letter-spacing:-0.7px">P</span>rogra<span style="letter-spacing:0.7px">...</span></div>
<div style="position:absolute;left:318px;top:139px;font-size:11px;line-height:11px;height:11px;white-space:nowrap;color:#000;font-weight:normal;letter-spacing:0px;">1</div>
<div style="position:absolute;left:391px;top:139px;font-size:11px;line-height:11px;height:11px;white-space:nowrap;color:#000;font-weight:normal;letter-spacing:0px;">868</div>
<div style="position:absolute;left:171px;top:154px;font-size:11px;line-height:11px;height:11px;white-space:nowrap;color:#000;font-weight:normal;letter-spacing:0px;">svchost.exe</div>
<div style="position:absolute;left:245px;top:154px;font-size:11px;line-height:11px;height:11px;white-space:nowrap;color:#000;font-weight:normal;letter-spacing:0px;"><span style="letter-spacing:-0.7px">C</span>:\W<span style="letter-spacing:-0.7px">INDO</span><span style="letter-spacing:0.7px">...</span></div>
<div style="position:absolute;left:318px;top:154px;font-size:11px;line-height:11px;height:11px;white-space:nowrap;color:#000;font-weight:normal;letter-spacing:0px;">16</div>
<div style="position:absolute;left:391px;top:154px;font-size:11px;line-height:11px;height:11px;white-space:nowrap;color:#000;font-weight:normal;letter-spacing:0px;">884</div>
<div style="position:absolute;left:171px;top:169px;font-size:11px;line-height:11px;height:11px;white-space:nowrap;color:#000;font-weight:normal;letter-spacing:0px;">svchost.exe</div>
<div style="position:absolute;left:245px;top:169px;font-size:11px;line-height:11px;height:11px;white-space:nowrap;color:#000;font-weight:normal;letter-spacing:0px;"><span style="letter-spacing:-0.7px">C</span>:\W<span style="letter-spacing:-0.7px">INDO</span><span style="letter-spacing:0.7px">...</span></div>
<div style="position:absolute;left:318px;top:169px;font-size:11px;line-height:11px;height:11px;white-space:nowrap;color:#000;font-weight:normal;letter-spacing:0px;">56</div>
<div style="position:absolute;left:391px;top:169px;font-size:11px;line-height:11px;height:11px;white-space:nowrap;color:#000;font-weight:normal;letter-spacing:0px;">1048</div>
<div style="position:absolute;left:171px;top:184px;font-size:11px;line-height:11px;height:11px;white-space:nowrap;color:#000;font-weight:normal;letter-spacing:0px;">spoolsv.exe</div>
<div style="position:absolute;left:245px;top:184px;font-size:11px;line-height:11px;height:11px;white-space:nowrap;color:#000;font-weight:normal;letter-spacing:0px;"><span style="letter-spacing:-0.7px">C</span>:\W<span style="letter-spacing:-0.7px">INDO</span><span style="letter-spacing:0.7px">...</span></div>
<div style="position:absolute;left:318px;top:184px;font-size:11px;line-height:11px;height:11px;white-space:nowrap;color:#000;font-weight:normal;letter-spacing:0px;">10</div>
<div style="position:absolute;left:391px;top:184px;font-size:11px;line-height:11px;height:11px;white-space:nowrap;color:#000;font-weight:normal;letter-spacing:0px;">1412</div>
<div style="position:absolute;left:171px;top:199px;font-size:11px;line-height:11px;height:11px;white-space:nowrap;color:#000;font-weight:normal;letter-spacing:0px;"><span style="letter-spacing:-0.7px">G</span>oogle<span style="letter-spacing:-0.7px">U</span>pd<span style="letter-spacing:0.7px">...</span></div>
<div style="position:absolute;left:245px;top:199px;font-size:11px;line-height:11px;height:11px;white-space:nowrap;color:#000;font-weight:normal;letter-spacing:0px;"><span style="letter-spacing:-0.7px">C</span>:\<span style="letter-spacing:-0.7px">P</span>rogra<span style="letter-spacing:0.7px">...</span></div>
<div style="position:absolute;left:318px;top:199px;font-size:11px;line-height:11px;height:11px;white-space:nowrap;color:#000;font-weight:normal;letter-spacing:0px;">6</div>
<div style="position:absolute;left:391px;top:199px;font-size:11px;line-height:11px;height:11px;white-space:nowrap;color:#000;font-weight:normal;letter-spacing:0px;">1660</div>
<div style="position:absolute;left:171px;top:214px;font-size:11px;line-height:11px;height:11px;white-space:nowrap;color:#000;font-weight:normal;letter-spacing:0px;"><span style="letter-spacing:-0.7px">VGA</span>uth<span style="letter-spacing:-0.7px">S</span>er<span style="letter-spacing:0.7px">...</span></div>
<div style="position:absolute;left:245px;top:214px;font-size:11px;line-height:11px;height:11px;white-space:nowrap;color:#000;font-weight:normal;letter-spacing:0px;"><span style="letter-spacing:-0.7px">C</span>:\<span style="letter-spacing:-0.7px">P</span>rogra<span style="letter-spacing:0.7px">...</span></div>
<div style="position:absolute;left:318px;top:214px;font-size:11px;line-height:11px;height:11px;white-space:nowrap;color:#000;font-weight:normal;letter-spacing:0px;">2</div>
<div style="position:absolute;left:391px;top:214px;font-size:11px;line-height:11px;height:11px;white-space:nowrap;color:#000;font-weight:normal;letter-spacing:0px;">1772</div>
<div style="position:absolute;left:171px;top:229px;font-size:11px;line-height:11px;height:11px;white-space:nowrap;color:#000;font-weight:normal;letter-spacing:0px;">vmtoolsd.exe</div>
<div style="position:absolute;left:245px;top:229px;font-size:11px;line-height:11px;height:11px;white-space:nowrap;color:#000;font-weight:normal;letter-spacing:0px;"><span style="letter-spacing:-0.7px">C</span>:\<span style="letter-spacing:-0.7px">P</span>rogra<span style="letter-spacing:0.7px">...</span></div>
<div style="position:absolute;left:318px;top:229px;font-size:11px;line-height:11px;height:11px;white-space:nowrap;color:#000;font-weight:normal;letter-spacing:0px;">7</div>
<div style="position:absolute;left:391px;top:229px;font-size:11px;line-height:11px;height:11px;white-space:nowrap;color:#000;font-weight:normal;letter-spacing:0px;">1916</div>
<div style="position:absolute;left:171px;top:244px;font-size:11px;line-height:11px;height:11px;white-space:nowrap;color:#000;font-weight:normal;letter-spacing:0px;">rundll32.exe</div>
<div style="position:absolute;left:245px;top:244px;font-size:11px;line-height:11px;height:11px;white-space:nowrap;color:#000;font-weight:normal;letter-spacing:0px;"><span style="letter-spacing:-0.7px">C</span>:\W<span style="letter-spacing:-0.7px">INDO</span><span style="letter-spacing:0.7px">...</span></div>
<div style="position:absolute;left:318px;top:244px;font-size:11px;line-height:11px;height:11px;white-space:nowrap;color:#000;font-weight:normal;letter-spacing:0px;">4</div>
<div style="position:absolute;left:391px;top:244px;font-size:11px;line-height:11px;height:11px;white-space:nowrap;color:#000;font-weight:normal;letter-spacing:0px;">588</div>
<div style="position:absolute;left:171px;top:259px;font-size:11px;line-height:11px;height:11px;white-space:nowrap;color:#000;font-weight:normal;letter-spacing:0px;">vmtoolsd.exe</div>
<div style="position:absolute;left:245px;top:259px;font-size:11px;line-height:11px;height:11px;white-space:nowrap;color:#000;font-weight:normal;letter-spacing:0px;"><span style="letter-spacing:-0.7px">C</span>:\<span style="letter-spacing:-0.7px">P</span>rogra<span style="letter-spacing:0.7px">...</span></div>
<div style="position:absolute;left:318px;top:259px;font-size:11px;line-height:11px;height:11px;white-space:nowrap;color:#000;font-weight:normal;letter-spacing:0px;">3</div>
<div style="position:absolute;left:391px;top:259px;font-size:11px;line-height:11px;height:11px;white-space:nowrap;color:#000;font-weight:normal;letter-spacing:0px;">592</div>
<div style="position:absolute;left:171px;top:274px;font-size:11px;line-height:11px;height:11px;white-space:nowrap;color:#000;font-weight:normal;letter-spacing:0px;">ctfmon.exe</div>
<div style="position:absolute;left:245px;top:274px;font-size:11px;line-height:11px;height:11px;white-space:nowrap;color:#000;font-weight:normal;letter-spacing:0px;"><span style="letter-spacing:-0.7px">C</span>:\W<span style="letter-spacing:-0.7px">INDO</span><span style="letter-spacing:0.7px">...</span></div>
<div style="position:absolute;left:318px;top:274px;font-size:11px;line-height:11px;height:11px;white-space:nowrap;color:#000;font-weight:normal;letter-spacing:0px;">1</div>
<div style="position:absolute;left:391px;top:274px;font-size:11px;line-height:11px;height:11px;white-space:nowrap;color:#000;font-weight:normal;letter-spacing:0px;">596</div>
<div style="position:absolute;left:171px;top:289px;font-size:11px;line-height:11px;height:11px;white-space:nowrap;color:#000;font-weight:normal;letter-spacing:0px;">wscntfy.exe</div>
<div style="position:absolute;left:245px;top:289px;font-size:11px;line-height:11px;height:11px;white-space:nowrap;color:#000;font-weight:normal;letter-spacing:0px;"><span style="letter-spacing:-0.7px">C</span>:\W<span style="letter-spacing:-0.7px">INDO</span><span style="letter-spacing:0.7px">...</span></div>
<div style="position:absolute;left:318px;top:289px;font-size:11px;line-height:11px;height:11px;white-space:nowrap;color:#000;font-weight:normal;letter-spacing:0px;">1</div>
<div style="position:absolute;left:391px;top:289px;font-size:11px;line-height:11px;height:11px;white-space:nowrap;color:#000;font-weight:normal;letter-spacing:0px;">612</div>
<div style="position:absolute;left:171px;top:304px;font-size:11px;line-height:11px;height:11px;white-space:nowrap;color:#000;font-weight:normal;letter-spacing:0px;">explorer.exe</div>
<div style="position:absolute;left:245px;top:304px;font-size:11px;line-height:11px;height:11px;white-space:nowrap;color:#000;font-weight:normal;letter-spacing:0px;"><span style="letter-spacing:-0.7px">C</span>:\W<span style="letter-spacing:-0.7px">INDO</span><span style="letter-spacing:0.7px">...</span></div>
<div style="position:absolute;left:318px;top:304px;font-size:11px;line-height:11px;height:11px;white-space:nowrap;color:#000;font-weight:normal;letter-spacing:0px;">12</div>
<div style="position:absolute;left:391px;top:304px;font-size:11px;line-height:11px;height:11px;white-space:nowrap;color:#000;font-weight:normal;letter-spacing:0px;">1540</div>
<div style="position:absolute;left:171px;top:319px;font-size:11px;line-height:11px;height:11px;white-space:nowrap;color:#000;font-weight:normal;letter-spacing:0px;">server.exe</div>
<div style="position:absolute;left:245px;top:319px;font-size:11px;line-height:11px;height:11px;white-space:nowrap;color:#000;font-weight:normal;letter-spacing:0px;"><span style="letter-spacing:-0.7px">C</span>:\<span style="letter-spacing:-0.7px">DOCUM</span><span style="letter-spacing:0.7px">...</span></div>
<div style="position:absolute;left:318px;top:319px;font-size:11px;line-height:11px;height:11px;white-space:nowrap;color:#000;font-weight:normal;letter-spacing:0px;">8</div>
<div style="position:absolute;left:391px;top:319px;font-size:11px;line-height:11px;height:11px;white-space:nowrap;color:#000;font-weight:normal;letter-spacing:0px;">1628</div>
<div style="position:absolute;left:461px;top:55px;width:369px;height:460px;box-sizing:border-box;border:1px solid #7f9db9;background:#fff;"></div>
<div style="position:absolute;left:463px;top:57px;width:348px;height:20px;background:linear-gradient(to bottom,#fdfbfd 0px,#fdfbfd 17px,#e2e2ec 17px,#e2e2ec 18px,#d0d0de 18px,#d0d0de 19px,#bcbccc 19px,#bcbccc 20px);"></div>
<div style="position:absolute;left:644px;top:60px;width:1px;height:13px;background:#c6c6da;"></div>
<div style="position:absolute;left:472px;top:62px;font-size:11px;line-height:11px;height:11px;white-space:nowrap;color:#000;font-weight:normal;letter-spacing:0px;"><span style="letter-spacing:-0.7px">P</span>rocess <span style="letter-spacing:-0.7px">M</span>odules</div>
<div style="position:absolute;left:655px;top:62px;font-size:11px;line-height:11px;height:11px;white-space:nowrap;color:#000;font-weight:normal;letter-spacing:0px;"><span style="letter-spacing:-0.7px">M</span>odule <span style="letter-spacing:-0.7px">P</span>ath</div>
<div style="position:absolute;left:463px;top:91px;width:348px;height:1px;background:#e6e0e8;"></div>
<div style="position:absolute;left:463px;top:106px;width:348px;height:1px;background:#e6e0e8;"></div>
<div style="position:absolute;left:463px;top:121px;width:348px;height:1px;background:#e6e0e8;"></div>
<div style="position:absolute;left:463px;top:136px;width:348px;height:1px;background:#e6e0e8;"></div>
<div style="position:absolute;left:463px;top:151px;width:348px;height:1px;background:#e6e0e8;"></div>
<div style="position:absolute;left:463px;top:166px;width:348px;height:1px;background:#e6e0e8;"></div>
<div style="position:absolute;left:463px;top:181px;width:348px;height:1px;background:#e6e0e8;"></div>
<div style="position:absolute;left:463px;top:196px;width:348px;height:1px;background:#e6e0e8;"></div>
<div style="position:absolute;left:463px;top:211px;width:348px;height:1px;background:#e6e0e8;"></div>
<div style="position:absolute;left:463px;top:226px;width:348px;height:1px;background:#e6e0e8;"></div>
<div style="position:absolute;left:463px;top:241px;width:348px;height:1px;background:#e6e0e8;"></div>
<div style="position:absolute;left:463px;top:256px;width:348px;height:1px;background:#e6e0e8;"></div>
<div style="position:absolute;left:463px;top:271px;width:348px;height:1px;background:#e6e0e8;"></div>
<div style="position:absolute;left:463px;top:286px;width:348px;height:1px;background:#e6e0e8;"></div>
<div style="position:absolute;left:463px;top:301px;width:348px;height:1px;background:#e6e0e8;"></div>
<div style="position:absolute;left:463px;top:316px;width:348px;height:1px;background:#e6e0e8;"></div>
<div style="position:absolute;left:463px;top:331px;width:348px;height:1px;background:#e6e0e8;"></div>
<div style="position:absolute;left:463px;top:346px;width:348px;height:1px;background:#e6e0e8;"></div>
<div style="position:absolute;left:463px;top:361px;width:348px;height:1px;background:#e6e0e8;"></div>
<div style="position:absolute;left:463px;top:376px;width:348px;height:1px;background:#e6e0e8;"></div>
<div style="position:absolute;left:463px;top:391px;width:348px;height:1px;background:#e6e0e8;"></div>
<div style="position:absolute;left:463px;top:406px;width:348px;height:1px;background:#e6e0e8;"></div>
<div style="position:absolute;left:463px;top:421px;width:348px;height:1px;background:#e6e0e8;"></div>
<div style="position:absolute;left:463px;top:436px;width:348px;height:1px;background:#e6e0e8;"></div>
<div style="position:absolute;left:463px;top:451px;width:348px;height:1px;background:#e6e0e8;"></div>
<div style="position:absolute;left:463px;top:466px;width:348px;height:1px;background:#e6e0e8;"></div>
<div style="position:absolute;left:463px;top:481px;width:348px;height:1px;background:#e6e0e8;"></div>
<div style="position:absolute;left:646px;top:77px;width:1px;height:419px;background:#e6e0e8;"></div>
<div style="position:absolute;left:467px;top:256px;width:344px;height:15px;background:#e2dee8;"></div>
<div style="position:absolute;left:463px;top:77px;width:348px;height:419px;overflow:hidden;">
<div style="position:absolute;left:6px;top:2px;font-size:11px;line-height:11px;letter-spacing:0px;white-space:nowrap">rundll32.exe</div>
<div style="position:absolute;left:189px;top:2px;font-size:11px;line-height:11px;letter-spacing:0px;white-space:nowrap"><span style="letter-spacing:-0.7px">C</span>:\W<span style="letter-spacing:-0.7px">INDO</span>W<span style="letter-spacing:-0.7px">S</span>\system32\</div>
<div style="position:absolute;left:6px;top:17px;font-size:11px;line-height:11px;letter-spacing:0px;white-space:nowrap">ntdll.dll</div>
<div style="position:absolute;left:189px;top:17px;font-size:11px;line-height:11px;letter-spacing:0px;white-space:nowrap"><span style="letter-spacing:-0.7px">C</span>:\W<span style="letter-spacing:-0.7px">INDO</span>W<span style="letter-spacing:-0.7px">S</span>\system32\</div>
<div style="position:absolute;left:6px;top:32px;font-size:11px;line-height:11px;letter-spacing:0px;white-space:nowrap">kernel32.dll</div>
<div style="position:absolute;left:189px;top:32px;font-size:11px;line-height:11px;letter-spacing:0px;white-space:nowrap"><span style="letter-spacing:-0.7px">C</span>:\W<span style="letter-spacing:-0.7px">INDO</span>W<span style="letter-spacing:-0.7px">S</span>\system32\</div>
<div style="position:absolute;left:6px;top:47px;font-size:11px;line-height:11px;letter-spacing:0px;white-space:nowrap">msvcrt.dll</div>
<div style="position:absolute;left:189px;top:47px;font-size:11px;line-height:11px;letter-spacing:0px;white-space:nowrap"><span style="letter-spacing:-0.7px">C</span>:\W<span style="letter-spacing:-0.7px">INDO</span>W<span style="letter-spacing:-0.7px">S</span>\system32\</div>
<div style="position:absolute;left:6px;top:62px;font-size:11px;line-height:11px;letter-spacing:0px;white-space:nowrap"><span style="letter-spacing:-0.7px">GDI</span>32.dll</div>
<div style="position:absolute;left:189px;top:62px;font-size:11px;line-height:11px;letter-spacing:0px;white-space:nowrap"><span style="letter-spacing:-0.7px">C</span>:\W<span style="letter-spacing:-0.7px">INDO</span>W<span style="letter-spacing:-0.7px">S</span>\system32\</div>
<div style="position:absolute;left:6px;top:77px;font-size:11px;line-height:11px;letter-spacing:0px;white-space:nowrap"><span style="letter-spacing:-0.7px">USER</span>32.dll</div>
<div style="position:absolute;left:189px;top:77px;font-size:11px;line-height:11px;letter-spacing:0px;white-space:nowrap"><span style="letter-spacing:-0.7px">C</span>:\W<span style="letter-spacing:-0.7px">INDO</span>W<span style="letter-spacing:-0.7px">S</span>\system32\</div>
<div style="position:absolute;left:6px;top:92px;font-size:11px;line-height:11px;letter-spacing:0px;white-space:nowrap"><span style="letter-spacing:-0.7px">IMAGEHLP</span>.dll</div>
<div style="position:absolute;left:189px;top:92px;font-size:11px;line-height:11px;letter-spacing:0px;white-space:nowrap"><span style="letter-spacing:-0.7px">C</span>:\W<span style="letter-spacing:-0.7px">INDO</span>W<span style="letter-spacing:-0.7px">S</span>\system32\</div>
<div style="position:absolute;left:6px;top:107px;font-size:11px;line-height:11px;letter-spacing:0px;white-space:nowrap"><span style="letter-spacing:-0.7px">ADVAPI</span>32.dll</div>
<div style="position:absolute;left:189px;top:107px;font-size:11px;line-height:11px;letter-spacing:0px;white-space:nowrap"><span style="letter-spacing:-0.7px">C</span>:\W<span style="letter-spacing:-0.7px">INDO</span>W<span style="letter-spacing:-0.7px">S</span>\system32\</div>
<div style="position:absolute;left:6px;top:122px;font-size:11px;line-height:11px;letter-spacing:0px;white-space:nowrap"><span style="letter-spacing:-0.7px">RPCRT</span>4.dll</div>
<div style="position:absolute;left:189px;top:122px;font-size:11px;line-height:11px;letter-spacing:0px;white-space:nowrap"><span style="letter-spacing:-0.7px">C</span>:\W<span style="letter-spacing:-0.7px">INDO</span>W<span style="letter-spacing:-0.7px">S</span>\system32\</div>
<div style="position:absolute;left:6px;top:137px;font-size:11px;line-height:11px;letter-spacing:0px;white-space:nowrap"><span style="letter-spacing:-0.7px">S</span>ecur32.dll</div>
<div style="position:absolute;left:189px;top:137px;font-size:11px;line-height:11px;letter-spacing:0px;white-space:nowrap"><span style="letter-spacing:-0.7px">C</span>:\W<span style="letter-spacing:-0.7px">INDO</span>W<span style="letter-spacing:-0.7px">S</span>\system32\</div>
<div style="position:absolute;left:6px;top:152px;font-size:11px;line-height:11px;letter-spacing:0px;white-space:nowrap"><span style="letter-spacing:-0.7px">S</span>him<span style="letter-spacing:-0.7px">E</span>ng.dll</div>
<div style="position:absolute;left:189px;top:152px;font-size:11px;line-height:11px;letter-spacing:0px;white-space:nowrap"><span style="letter-spacing:-0.7px">C</span>:\W<span style="letter-spacing:-0.7px">INDO</span>W<span style="letter-spacing:-0.7px">S</span>\system32\</div>
<div style="position:absolute;left:6px;top:167px;font-size:11px;line-height:11px;letter-spacing:0px;white-space:nowrap"><span style="letter-spacing:-0.7px">A</span>c<span style="letter-spacing:-0.7px">G</span>enral.<span style="letter-spacing:-0.7px">DLL</span></div>
<div style="position:absolute;left:189px;top:167px;font-size:11px;line-height:11px;letter-spacing:0px;white-space:nowrap"><span style="letter-spacing:-0.7px">C</span>:\W<span style="letter-spacing:-0.7px">INDO</span>W<span style="letter-spacing:-0.7px">S</span>\<span style="letter-spacing:-0.7px">A</span>pp<span style="letter-spacing:-0.7px">P</span>atch\</div>
<div style="position:absolute;left:6px;top:182px;font-size:11px;line-height:11px;letter-spacing:0px;white-space:nowrap">W<span style="letter-spacing:-0.7px">INMM</span>.dll</div>
<div style="position:absolute;left:189px;top:182px;font-size:11px;line-height:11px;letter-spacing:0px;white-space:nowrap"><span style="letter-spacing:-0.7px">C</span>:\W<span style="letter-spacing:-0.7px">INDO</span>W<span style="letter-spacing:-0.7px">S</span>\system32\</div>
<div style="position:absolute;left:6px;top:197px;font-size:11px;line-height:11px;letter-spacing:0px;white-space:nowrap">ole32.dll</div>
<div style="position:absolute;left:189px;top:197px;font-size:11px;line-height:11px;letter-spacing:0px;white-space:nowrap"><span style="letter-spacing:-0.7px">C</span>:\W<span style="letter-spacing:-0.7px">INDO</span>W<span style="letter-spacing:-0.7px">S</span>\system32\</div>
<div style="position:absolute;left:6px;top:212px;font-size:11px;line-height:11px;letter-spacing:0px;white-space:nowrap"><span style="letter-spacing:-0.7px">OLEAUT</span>32.dll</div>
<div style="position:absolute;left:189px;top:212px;font-size:11px;line-height:11px;letter-spacing:0px;white-space:nowrap"><span style="letter-spacing:-0.7px">C</span>:\W<span style="letter-spacing:-0.7px">INDO</span>W<span style="letter-spacing:-0.7px">S</span>\system32\</div>
<div style="position:absolute;left:6px;top:227px;font-size:11px;line-height:11px;letter-spacing:0px;white-space:nowrap"><span style="letter-spacing:-0.7px">MSACM</span>32.dll</div>
<div style="position:absolute;left:189px;top:227px;font-size:11px;line-height:11px;letter-spacing:0px;white-space:nowrap"><span style="letter-spacing:-0.7px">C</span>:\W<span style="letter-spacing:-0.7px">INDO</span>W<span style="letter-spacing:-0.7px">S</span>\system32\</div>
<div style="position:absolute;left:6px;top:242px;font-size:11px;line-height:11px;letter-spacing:0px;white-space:nowrap"><span style="letter-spacing:-0.7px">VERSION</span>.dll</div>
<div style="position:absolute;left:189px;top:242px;font-size:11px;line-height:11px;letter-spacing:0px;white-space:nowrap"><span style="letter-spacing:-0.7px">C</span>:\W<span style="letter-spacing:-0.7px">INDO</span>W<span style="letter-spacing:-0.7px">S</span>\system32\</div>
<div style="position:absolute;left:6px;top:257px;font-size:11px;line-height:11px;letter-spacing:0px;white-space:nowrap"><span style="letter-spacing:-0.7px">SHELL</span>32.dll</div>
<div style="position:absolute;left:189px;top:257px;font-size:11px;line-height:11px;letter-spacing:0px;white-space:nowrap"><span style="letter-spacing:-0.7px">C</span>:\W<span style="letter-spacing:-0.7px">INDO</span>W<span style="letter-spacing:-0.7px">S</span>\system32\</div>
<div style="position:absolute;left:6px;top:272px;font-size:11px;line-height:11px;letter-spacing:0px;white-space:nowrap"><span style="letter-spacing:-0.7px">SHL</span>W<span style="letter-spacing:-0.7px">API</span>.dll</div>
<div style="position:absolute;left:189px;top:272px;font-size:11px;line-height:11px;letter-spacing:0px;white-space:nowrap"><span style="letter-spacing:-0.7px">C</span>:\W<span style="letter-spacing:-0.7px">INDO</span>W<span style="letter-spacing:-0.7px">S</span>\system32\</div>
<div style="position:absolute;left:6px;top:287px;font-size:11px;line-height:11px;letter-spacing:0px;white-space:nowrap"><span style="letter-spacing:-0.7px">USERENV</span>.dll</div>
<div style="position:absolute;left:189px;top:287px;font-size:11px;line-height:11px;letter-spacing:0px;white-space:nowrap"><span style="letter-spacing:-0.7px">C</span>:\W<span style="letter-spacing:-0.7px">INDO</span>W<span style="letter-spacing:-0.7px">S</span>\system32\</div>
<div style="position:absolute;left:6px;top:302px;font-size:11px;line-height:11px;letter-spacing:0px;white-space:nowrap"><span style="letter-spacing:-0.7px">U</span>x<span style="letter-spacing:-0.7px">T</span>heme.dll</div>
<div style="position:absolute;left:189px;top:302px;font-size:11px;line-height:11px;letter-spacing:0px;white-space:nowrap"><span style="letter-spacing:-0.7px">C</span>:\W<span style="letter-spacing:-0.7px">INDO</span>W<span style="letter-spacing:-0.7px">S</span>\system32\</div>
<div style="position:absolute;left:6px;top:317px;font-size:11px;line-height:11px;letter-spacing:0px;white-space:nowrap"><span style="letter-spacing:-0.7px">IMM</span>32.<span style="letter-spacing:-0.7px">DLL</span></div>
<div style="position:absolute;left:189px;top:317px;font-size:11px;line-height:11px;letter-spacing:0px;white-space:nowrap"><span style="letter-spacing:-0.7px">C</span>:\W<span style="letter-spacing:-0.7px">INDO</span>W<span style="letter-spacing:-0.7px">S</span>\system32\</div>
<div style="position:absolute;left:6px;top:332px;font-size:11px;line-height:11px;letter-spacing:0px;white-space:nowrap">comctl32.dll</div>
<div style="position:absolute;left:189px;top:332px;font-size:11px;line-height:11px;letter-spacing:0px;white-space:nowrap"><span style="letter-spacing:-0.7px">C</span>:\W<span style="letter-spacing:-0.7px">INDO</span>W<span style="letter-spacing:-0.7px">S</span>\Win<span style="letter-spacing:-0.7px">S</span>x<span style="letter-spacing:-0.7px">S</span>\x86_<span style="letter-spacing:-0.7px">M</span>icrosoft.Windows.<span style="letter-spacing:-0.7px">C</span>ommon-<span style="letter-spacing:-0.7px">C</span>ontrols</div>
<div style="position:absolute;left:6px;top:347px;font-size:11px;line-height:11px;letter-spacing:0px;white-space:nowrap">comctl32.dll</div>
<div style="position:absolute;left:189px;top:347px;font-size:11px;line-height:11px;letter-spacing:0px;white-space:nowrap"><span style="letter-spacing:-0.7px">C</span>:\W<span style="letter-spacing:-0.7px">INDO</span>W<span style="letter-spacing:-0.7px">S</span>\system32\</div>
<div style="position:absolute;left:6px;top:362px;font-size:11px;line-height:11px;letter-spacing:0px;white-space:nowrap">bthprops.cpl</div>
<div style="position:absolute;left:189px;top:362px;font-size:11px;line-height:11px;letter-spacing:0px;white-space:nowrap"><span style="letter-spacing:-0.7px">C</span>:\W<span style="letter-spacing:-0.7px">INDO</span>W<span style="letter-spacing:-0.7px">S</span>\system32\</div>
<div style="position:absolute;left:6px;top:377px;font-size:11px;line-height:11px;letter-spacing:0px;white-space:nowrap"><span style="letter-spacing:-0.7px">DEVMGR</span>.<span style="letter-spacing:-0.7px">DLL</span></div>
<div style="position:absolute;left:189px;top:377px;font-size:11px;line-height:11px;letter-spacing:0px;white-space:nowrap"><span style="letter-spacing:-0.7px">C</span>:\W<span style="letter-spacing:-0.7px">INDO</span>W<span style="letter-spacing:-0.7px">S</span>\system32\</div>
<div style="position:absolute;left:6px;top:392px;font-size:11px;line-height:11px;letter-spacing:0px;white-space:nowrap"><span style="letter-spacing:-0.7px">MPR</span>.dll</div>
<div style="position:absolute;left:189px;top:392px;font-size:11px;line-height:11px;letter-spacing:0px;white-space:nowrap"><span style="letter-spacing:-0.7px">C</span>:\W<span style="letter-spacing:-0.7px">INDO</span>W<span style="letter-spacing:-0.7px">S</span>\system32\</div>
<div style="position:absolute;left:6px;top:407px;font-size:11px;line-height:11px;letter-spacing:0px;white-space:nowrap"><span style="letter-spacing:-0.7px">SETUPAPI</span>.dll</div>
<div style="position:absolute;left:189px;top:407px;font-size:11px;line-height:11px;letter-spacing:0px;white-space:nowrap"><span style="letter-spacing:-0.7px">C</span>:\W<span style="letter-spacing:-0.7px">INDO</span>W<span style="letter-spacing:-0.7px">S</span>\system32\</div>
</div>
<div style="position:absolute;left:811px;top:57px;width:17px;height:439px;background:linear-gradient(to right,#f0eef4,#fdfdfd 50%,#f0eef4);"></div>
<div style="position:absolute;left:812px;top:57px;width:16px;height:16px;box-sizing:border-box;border:1px solid #9ea2b4;border-radius:2px;background:linear-gradient(to bottom,#ffffff 0%,#f0f0f8 30%,#d8d8e8 70%,#c6c8dc 100%);"><svg style="left:2px;top:4px" width="11" height="7"><path d="M1.2 5.8 L5.5 1.6 L9.8 5.8" stroke="#262626" stroke-width="2.4" fill="none"/></svg></div>
<div style="position:absolute;left:812px;top:74px;width:16px;height:322px;box-sizing:border-box;border:1px solid #9a9ab4;border-radius:2px;background:linear-gradient(to right,#fafaff 0%,#ece8f0 35%,#d8d8e6 70%,#c8c8dc 100%);"><div style="position:absolute;left:4px;top:157px;width:7px;height:8px;background:repeating-linear-gradient(to bottom,#8c90a8 0px,#8c90a8 1px,#f4f4f8 1px,#f4f4f8 2px);"></div></div>
<div style="position:absolute;left:812px;top:479px;width:16px;height:17px;box-sizing:border-box;border:1px solid #9ea2b4;border-radius:2px;background:linear-gradient(to bottom,#ffffff 0%,#f0f0f8 30%,#d8d8e8 70%,#c6c8dc 100%);"><svg style="left:2px;top:5px" width="11" height="7"><path d="M1.2 1.2 L5.5 5.4 L9.8 1.2" stroke="#262626" stroke-width="2.4" fill="none"/></svg></div>
<div style="position:absolute;left:463px;top:496px;width:348px;height:17px;background:linear-gradient(to bottom,#f0eef4,#fdfdfd 50%,#f0eef4);"></div>
<div style="position:absolute;left:463px;top:497px;width:17px;height:16px;box-sizing:border-box;border:1px solid #9ea2b4;border-radius:2px;background:linear-gradient(to bottom,#ffffff 0%,#f0f0f8 30%,#d8d8e8 70%,#c6c8dc 100%);"><svg style="left:4px;top:2px" width="7" height="11"><path d="M5.8 1.2 L1.6 5.5 L5.8 9.8" stroke="#262626" stroke-width="2.4" fill="none"/></svg></div>
<div style="position:absolute;left:481px;top:497px;width:298px;height:16px;box-sizing:border-box;border:1px solid #9a9ab4;border-radius:2px;background:linear-gradient(to bottom,#fafaff 0%,#ece8f0 35%,#d8d8e6 70%,#c8c8dc 100%);"><div style="position:absolute;left:144px;top:4px;width:8px;height:6px;background:repeating-linear-gradient(to right,#8c90a8 0px,#8c90a8 1px,#f4f4f8 1px,#f4f4f8 2px);"></div></div>
<div style="position:absolute;left:794px;top:497px;width:17px;height:16px;box-sizing:border-box;border:1px solid #9ea2b4;border-radius:2px;background:linear-gradient(to bottom,#ffffff 0%,#f0f0f8 30%,#d8d8e8 70%,#c6c8dc 100%);"><svg style="left:5px;top:2px" width="7" height="11"><path d="M1.2 1.2 L5.4 5.5 L1.2 9.8" stroke="#262626" stroke-width="2.4" fill="none"/></svg></div>
<div style="position:absolute;left:811px;top:496px;width:17px;height:17px;background:#e6e2e8;"></div>
<div style="position:absolute;left:210px;top:289px;width:244px;height:205px;box-sizing:border-box;border:1px solid #9a9aa2;background:#fcfbfe;"></div>
<div style="position:absolute;left:213px;top:292px;width:26px;height:199px;background:#ececec;"></div>
<div style="position:absolute;left:239px;top:292px;width:1px;height:199px;background:#c8c8cc;"></div>
<div style="position:absolute;left:242px;top:296px;font-size:11px;line-height:11px;white-space:nowrap;color:#0a0a58;font-weight:bold;letter-spacing:0.2px;"><u style="text-decoration-thickness:1px;text-underline-offset:1px">G</u>et process</div>
<div style="position:absolute;left:242px;top:311px;font-size:11px;line-height:11px;white-space:nowrap;color:#0a0a58;font-weight:normal;letter-spacing:-0.2px;">Get process list</div>
<div style="position:absolute;left:242px;top:330px;font-size:11px;line-height:11px;white-space:nowrap;color:#0a0a58;font-weight:bold;letter-spacing:0.2px;">G<u style="text-decoration-thickness:1px;text-underline-offset:1px">e</u>t Process Modules</div>
<div style="position:absolute;left:242px;top:345px;font-size:11px;line-height:11px;white-space:nowrap;color:#0a0a58;font-weight:normal;letter-spacing:-0.2px;">Get selected process modules</div>
<div style="position:absolute;left:242px;top:368px;font-size:11px;line-height:11px;white-space:nowrap;color:#0a0a58;font-weight:bold;letter-spacing:0.2px;"><u style="text-decoration-thickness:1px;text-underline-offset:1px">K</u>ill Process</div>
<div style="position:absolute;left:242px;top:383px;font-size:11px;line-height:11px;white-space:nowrap;color:#0a0a58;font-weight:normal;letter-spacing:-0.2px;">Kill selected process</div>
<div style="position:absolute;left:242px;top:402px;font-size:11px;line-height:11px;white-space:nowrap;color:#0a0a58;font-weight:bold;letter-spacing:0.2px;"><u style="text-decoration-thickness:1px;text-underline-offset:1px">P</u>ause Process</div>
<div style="position:absolute;left:242px;top:417px;font-size:11px;line-height:11px;white-space:nowrap;color:#0a0a58;font-weight:normal;letter-spacing:-0.2px;">Pause a process can kill system proc too</div>
<div style="position:absolute;left:242px;top:436px;font-size:11px;line-height:11px;white-space:nowrap;color:#0a0a58;font-weight:bold;letter-spacing:0.2px;"><u style="text-decoration-thickness:1px;text-underline-offset:1px">R</u>esume Process</div>
<div style="position:absolute;left:242px;top:451px;font-size:11px;line-height:11px;white-space:nowrap;color:#0a0a58;font-weight:normal;letter-spacing:-0.2px;">Resume a paused process</div>
<div style="position:absolute;left:242px;top:474px;font-size:11px;line-height:11px;white-space:nowrap;color:#0a0a58;font-weight:bold;letter-spacing:0.2px;"><u style="text-decoration-thickness:1px;text-underline-offset:1px">C</u>lear Process List</div>
<div style="position:absolute;left:240px;top:360px;width:211px;height:2px;background:#dce4ee;"></div>
<div style="position:absolute;left:240px;top:362px;width:211px;height:1px;background:#c8ccd0;"></div>
<div style="position:absolute;left:240px;top:466px;width:211px;height:2px;background:#dce4ee;"></div>
<div style="position:absolute;left:240px;top:468px;width:211px;height:1px;background:#c8ccd0;"></div>
<div style="position:absolute;left:218px;top:294px;width:20px;height:21px;box-sizing:border-box;border:1px solid #a8a8ac;border-radius:2px;background:linear-gradient(#fbfbfb,#e4e4e4);box-shadow:inset -1px -1px 0 #d0d0d0;"></div>
<svg style="left:220px;top:296px" width="16" height="16" viewBox="0 0 16 16"><defs><linearGradient id="ba" x1="0" y1="0" x2="0" y2="1"><stop offset="0" stop-color="#a8ccff"/><stop offset="1" stop-color="#1450d8"/></linearGradient></defs><path d="M5 3 L11 3 L11 8 L14 8 L8 14 L2 8 L5 8 Z" fill="url(#ba)" stroke="#1a48c0" stroke-width="0.8"/></svg>
<svg style="left:218px;top:329px" width="20" height="20" viewBox="0 0 20 20"><defs><linearGradient id="ga" x1="0" y1="0" x2="0" y2="1"><stop offset="0" stop-color="#b8f080"/><stop offset="1" stop-color="#38b010"/></linearGradient></defs><path d="M6 1 L14 1 L14 8 L19.5 8 L10 18.5 L0.5 8 L6 8 Z" fill="url(#ga)" stroke="#50a830" stroke-width="0.6"/></svg>
<svg style="left:219px;top:368px" width="18" height="20" viewBox="0 0 18 20"><path d="M2 2 L16 16 M16 2 L2 16" stroke="#c80c0c" stroke-width="3.2"/><ellipse cx="9" cy="19" rx="7" ry="1" fill="#c8c8c8"/></svg>
<svg style="left:218px;top:400px" width="20" height="21" viewBox="0 0 20 21"><defs><radialGradient id="bp" cx="0.5" cy="0.35" r="0.6"><stop offset="0" stop-color="#6aa8ff"/><stop offset="0.7" stop-color="#1038b0"/><stop offset="1" stop-color="#06105a"/></radialGradient></defs><circle cx="10" cy="10.5" r="10" fill="url(#bp)"/><rect x="6" y="6.5" width="8" height="8" fill="#f0f0f8"/></svg>
<svg style="left:218px;top:434px" width="20" height="21" viewBox="0 0 20 21"><circle cx="10" cy="10.5" r="10" fill="url(#bp)"/><path d="M7 5.5 L15 10.5 L7 15.5 Z" fill="#f0f0f8"/></svg>
<svg style="left:217px;top:471px" width="21" height="20" viewBox="0 0 21 20"><path d="M4 19 Q1 10 10 6" stroke="#707070" stroke-width="3.5" fill="none"/><path d="M7 3 L12 6 L8 9 Z" fill="#707070"/><rect x="9" y="1" width="12" height="1.2" fill="#a06020"/><path d="M10 2 L20 2 Q20 8 15 10 Q20 12 20 19 L10 19 Q10 12 15 10 Q10 8 10 2Z" fill="#e8f0fc" stroke="#4a78c8" stroke-width="0.8"/><path d="M11 19 Q13 15 15 15 Q17 15 19 19 Z" fill="#606060"/></svg>
</div></body></html>
